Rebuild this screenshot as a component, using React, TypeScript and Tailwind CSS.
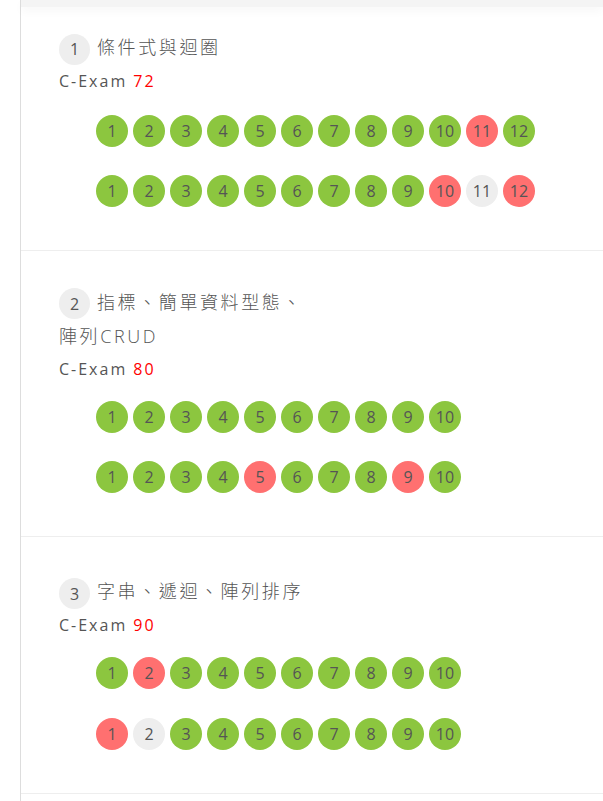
type Mark = 'ok' | 'bad' | 'none'

type Lesson = {
  no: number
  title: string
  score: number
  rows: Mark[][]
  pad: string
  rowsPad: string
}

const g = (n: number, bad: number[] = [], none: number[] = []): Mark[] =>
  Array.from({ length: n }, (_, i) =>
    bad.includes(i + 1) ? 'bad' : none.includes(i + 1) ? 'none' : 'ok'
  )

const lessons: Lesson[] = [
  {
    no: 1,
    title: '條件式與迴圈',
    score: 72,
    rows: [g(12, [11]), g(12, [10, 12], [11])],
    pad: 'pt-[23px]',
    rowsPad: 'pt-[18px] gap-7',
  },
  {
    no: 2,
    title: '指標、簡單資料型態、陣列CRUD',
    score: 80,
    rows: [g(10), g(10, [5, 9])],
    pad: 'pt-[34px]',
    rowsPad: 'pt-[16px] gap-7',
  },
  {
    no: 3,
    title: '字串、遞迴、陣列排序',
    score: 90,
    rows: [g(10, [2]), g(10, [1], [2])],
    pad: 'pt-[37px]',
    rowsPad: 'pt-[16px] gap-[29px]',
  },
]

const markClass: Record<Mark, string> = {
  ok: 'bg-[#8cc63f]',
  bad: 'bg-[#ff7070]',
  none: 'bg-[#eeeeee]',
}

const Dot = ({ n, mark }: { n: number; mark: Mark }) => (
  <span
    className={`w-8 h-8 rounded-full flex items-center justify-center text-[16px] text-[#555] ${markClass[mark]}`}
  >
    {n}
  </span>
)

const LessonCard = ({ lesson }: { lesson: Lesson }) => (
  <section className={`px-[38px] pb-[43px] border-b border-[#eeeeee] ${lesson.pad}`}>
    <h3 className="w-[252px] text-[18px] leading-[34px] tracking-[2.6px] text-[#555] font-light">
      <span className="inline-flex w-[31px] h-[31px] mr-[7px] rounded-full bg-[#eeeeee] items-center justify-center align-middle text-[16px] leading-none tracking-normal font-normal">
        {lesson.no}
      </span>
      {lesson.title}
    </h3>
    <p className="text-[16px] leading-[32px] tracking-[2px] text-[#555]">
      C-Exam <span className="text-[#ff0000]">{lesson.score}</span>
    </p>
    <div className={`pl-[37px] flex flex-col ${lesson.rowsPad}`}>
      {lesson.rows.map((row, r) => (
        <div key={r} className="flex gap-[5px]">
          {row.map((m, i) => (
            <Dot key={i} n={i + 1} mark={m} />
          ))}
        </div>
      ))}
    </div>
  </section>
)

export default function App() {
  return (
    <div
      className="min-h-[801px] bg-white pl-5"
      style={{ fontFamily: '"Open Sans", "Noto Sans CJK TC", sans-serif' }}
    >
      <div className="border-l border-[#dddddd] min-h-[801px]">
        <div className="h-[7px] bg-[#f4f4f4] shadow-[0_4px_10px_rgba(0,0,0,0.04)]" />
        {lessons.map(l => (
          <LessonCard key={l.no} lesson={l} />
        ))}
      </div>
    </div>
  )
}
